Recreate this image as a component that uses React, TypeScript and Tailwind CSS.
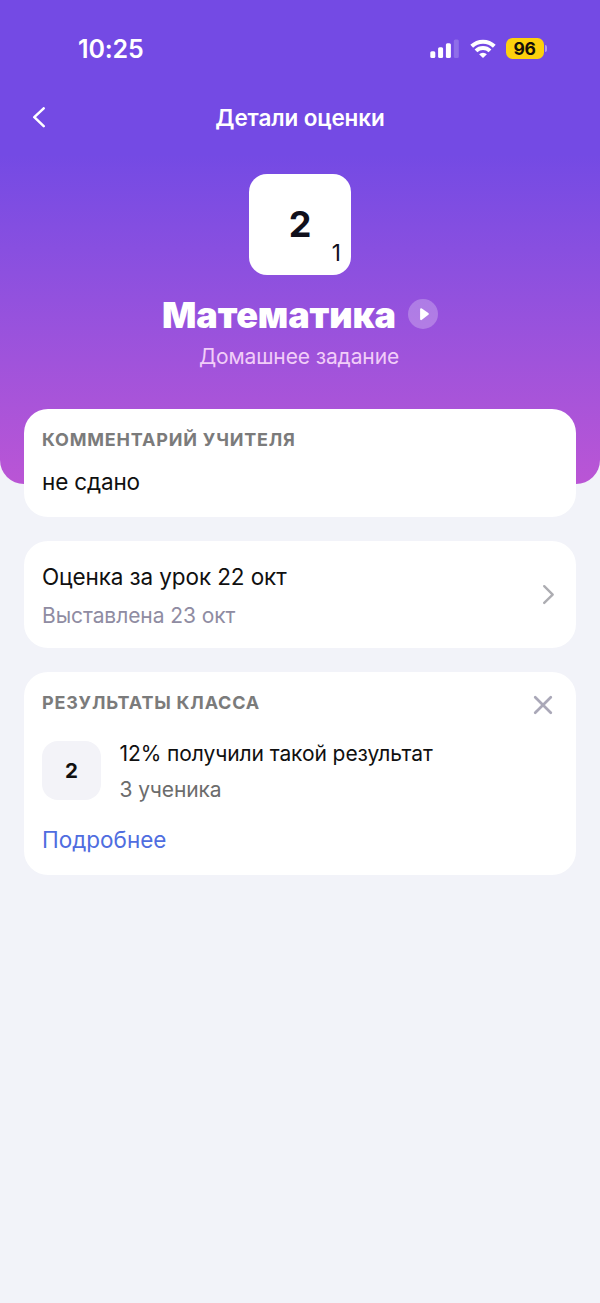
import React from "react";

function Signal() {
  return (
    <svg width="30" height="20" viewBox="0 0 30 20" fill="white">
      <rect x="0.3" y="12.2" width="5" height="6.8" rx="1.5" />
      <rect x="8.1" y="8.2" width="5" height="10.8" rx="1.5" />
      <rect x="15.9" y="4.2" width="5" height="14.8" rx="1.5" />
      <rect x="23.8" y="0.6" width="5" height="18.4" rx="1.5" opacity="0.2" />
    </svg>
  );
}

function Wifi() {
  return (
    <svg width="26" height="20" viewBox="0 0 26 20" fill="none" stroke="white" strokeWidth="4">
      <path d="M1.7 7.3 A16.2 16.2 0 0 1 24.3 7.3" />
      <path d="M6 11.9 A10 10 0 0 1 20 11.9" />
      <path d="M13 19 L9.1 15.2 A5.7 5.7 0 0 1 16.9 15.2 Z" fill="white" stroke="none" />
    </svg>
  );
}

function StatusBar() {
  return (
    <div className="flex h-[97px] items-center pl-[78px] pr-[53px]">
      <span className="text-[25px] leading-[30px] font-semibold tracking-[-0.15px]">10:25</span>
      <div className="ml-auto flex items-center">
        <Signal />
        <div className="ml-[10px] flex">
          <Wifi />
        </div>
        <div className="ml-[10px] flex h-[21px] w-[38px] items-center justify-center rounded-[6.5px] bg-[#fdd00d] text-[17.5px] leading-[21px] font-bold tracking-[-0.3px] text-[#15100a]">
          96
        </div>
        <div className="ml-[1px] h-[7px] w-[2.5px] rounded-r-full bg-white/45" />
      </div>
    </div>
  );
}

function Header() {
  return (
    <header className="h-[484px] rounded-b-[24px] bg-linear-to-b from-[#744ae4] from-32% to-[#ba55d5] text-white">
      <StatusBar />
      <div className="grid h-[42px] grid-cols-[1fr_auto_1fr] items-center">
        <svg className="ml-[31px]" width="16" height="22" viewBox="0 0 16 22" fill="none" stroke="white" strokeWidth="2.5" strokeLinecap="round" strokeLinejoin="round">
          <path d="M12.7 1.3 L3.3 10.2 L12.7 19.2" />
        </svg>
        <h1 className="text-[22.5px] leading-[28px] font-semibold tracking-[-0.12px]">Детали оценки</h1>
      </div>
      <div className="mt-[35px] flex flex-col items-center">
        <div className="relative flex h-[101px] w-[102px] items-center justify-center rounded-[18px] bg-white pb-[2px] text-[36px] leading-none font-bold text-[#10101c]">
          2
          <span className="absolute right-[10px] bottom-[8px] text-[22.5px] leading-[28px] font-normal">1</span>
        </div>
        <div className="mt-[17px] flex h-[44px] items-center gap-[12px]">
          <h2 className="pt-[2px] text-[36px] leading-[44px] font-black tracking-[-0.12px]">Математика</h2>
          <svg width="30" height="30" viewBox="0 0 30 30">
            <circle cx="15" cy="15" r="15" fill="white" fillOpacity="0.25" />
            <path d="M13.2 10.3 L19.7 15 L13.2 20 Z" fill="white" stroke="white" strokeWidth="2.2" strokeLinejoin="round" />
          </svg>
        </div>
        <p className="mt-[6px] pr-[2px] text-[21px] leading-[30px] tracking-[-0.12px] text-[#f1cdf8]">Домашнее задание</p>
      </div>
    </header>
  );
}

export default function App() {
  return (
    <div className="h-[1303px] w-[600px] overflow-hidden bg-[#f2f3f9] font-['Inter',sans-serif] text-[#101010]">
      <Header />
      <main className="relative -mt-[75px] flex flex-col gap-[24px] px-6">
        <section className="h-[108px] rounded-[24px] bg-white px-[18px] pt-[16px]">
          <h3 className="text-[18px] leading-[30px] font-bold tracking-[0.8px] text-[#7b7b7b]">КОММЕНТАРИЙ УЧИТЕЛЯ</h3>
          <p className="mt-[12px] text-[22.5px] leading-[30px] tracking-[-0.15px]">не сдано</p>
        </section>
        <section className="flex h-[107px] items-center rounded-[24px] bg-white pr-[20px] pl-[18px]">
          <div className="flex-1 pt-[4px]">
            <p className="text-[22.5px] leading-[38px] tracking-[-0.1px]">Оценка за урок 22 окт</p>
            <p className="text-[21px] leading-[40px] tracking-[-0.08px] text-[#8f8ca2]">Выставлена 23 окт</p>
          </div>
          <svg width="16" height="22" viewBox="0 0 16 22" fill="none" stroke="#adadb2" strokeWidth="2.4" strokeLinecap="round" strokeLinejoin="round">
            <path d="M4.2 2.2 L12.7 10.6 L4.2 18.9" />
          </svg>
        </section>
        <section className="h-[203px] rounded-[24px] bg-white px-[18px] pt-[16px]">
          <div className="flex h-[36px] justify-between">
            <h3 className="text-[18px] leading-[30px] font-bold tracking-[0.8px] text-[#7b7b7b]">РЕЗУЛЬТАТЫ КЛАССА</h3>
            <svg className="mt-[6px] mr-[4px]" width="22" height="22" viewBox="0 0 22 22" fill="none" stroke="#aaa8b8" strokeWidth="2.7" strokeLinecap="round">
              <path d="M3.2 3.2 L18.8 18.8 M18.8 3.2 L3.2 18.8" />
            </svg>
          </div>
          <div className="mt-[17px] flex h-[59px] items-center gap-[18.5px]">
            <div className="flex h-[59px] w-[59px] items-center justify-center rounded-[16px] bg-[#f3f3f8] pt-[1px] text-[20.5px] font-bold">2</div>
            <div className="pt-[2px]">
              <p className="text-[21px] leading-[36px] tracking-[-0.08px]">12% получили такой результат</p>
              <p className="text-[21px] leading-[36px] tracking-[-0.1px] text-[#6c6c6c]">3 ученика</p>
            </div>
          </div>
          <p className="mt-[25px] text-[22.5px] leading-[30px] text-[#4f6de0]">Подробнее</p>
        </section>
      </main>
    </div>
  );
}
